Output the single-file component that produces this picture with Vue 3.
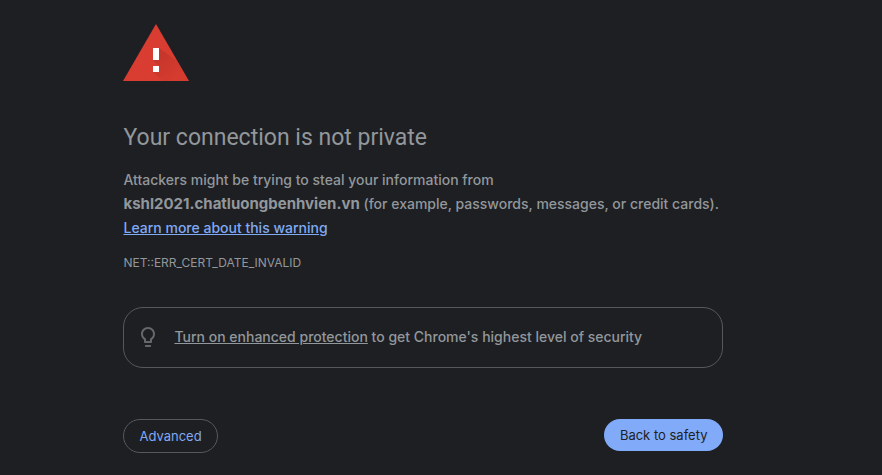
<script setup>
const host = 'kshl2021.chatluongbenhvien.vn'
const errorCode = 'NET::ERR_CERT_DATE_INVALID'
</script>

<template>
  <main class="interstitial">
    <svg class="warning" viewBox="0 0 66 57" role="img" aria-label="Warning">
      <defs>
        <linearGradient id="shade" x1="32" y1="28" x2="54" y2="52" gradientUnits="userSpaceOnUse">
          <stop offset="0" stop-color="#b83227" stop-opacity="0.7" />
          <stop offset="1" stop-color="#b83227" stop-opacity="0.1" />
        </linearGradient>
      </defs>
      <path d="M33 0L66 57H0Z" fill="#d93c30" />
      <path d="M36 24L54 37L65.500 57H40L30 48H36V42L30 36H36Z" fill="url(#shade)" />
      <path d="M30 24h6v12h-6zM30 42h6v6h-6z" fill="#fff" />
    </svg>

    <h1>Your connection is not private</h1>
    <p>
      Attackers might be trying to steal your information from
      <strong>{{ host }}</strong> (for example, passwords, messages, or credit cards).
      <a class="learn" href="#learn">Learn more about this warning</a>
    </p>
    <p class="code">{{ errorCode }}</p>

    <section class="promo">
      <svg class="bulb" viewBox="0 0 24 24" aria-hidden="true">
        <path d="M9 21c0 .55.45 1 1 1h4c.55 0 1-.45 1-1v-1H9v1zm3-19C8.140 2 5 5.140 5 9c0 2.380 1.190 4.470 3 5.740V17c0 .55.45 1 1 1h6c.55 0 1-.45 1-1v-2.260c1.810-1.270 3-3.360 3-5.740 0-3.860-3.140-7-7-7zm2.850 11.100l-.85.6V16h-4v-2.300l-.85-.6C7.800 12.160 7 10.630 7 9c0-2.760 2.240-5 5-5s5 2.240 5 5c0 1.630-.8 3.160-2.150 4.100z" />
      </svg>
      <p><a href="#protection">Turn on enhanced protection</a> to get Chrome's highest level of security</p>
    </section>

    <nav class="actions">
      <button type="button" class="secondary">Advanced</button>
      <button type="button" class="primary">Back to safety</button>
    </nav>
  </main>
</template>

<style>
body {
  background: #1e1f23;
}
</style>

<style scoped>
.interstitial {
  box-sizing: border-box;
  max-width: 600px;
  margin: 0 24px 0 14vw;
  padding: 24px 0 22px;
  color: #92979b;
  font-family: Inter, "Liberation Sans", sans-serif;
  font-size: 14px;
  font-weight: 500;
  line-height: 24px;
}
.warning {
  display: block;
  width: 66px;
  height: 57px;
}
h1 {
  margin: 41px 0 14px;
  font-family: Roboto, "Liberation Sans", sans-serif;
  font-size: 23px;
  font-weight: 400;
  line-height: 32px;
}
p {
  margin: 0;
}
strong {
  display: inline-block;
  font-size: 15px;
  font-weight: 700;
  line-height: 20px;
}
.learn {
  display: table;
  color: #80aaf4;
}
.code {
  margin-top: 11px;
  font-size: 12px;
  font-weight: 400;
}
.promo {
  display: flex;
  align-items: center;
  gap: 14px;
  margin-top: 32px;
  padding: 17px 12px 18px;
  border: 1px solid #55585c;
  border-radius: 20px;
}
.bulb {
  flex: none;
  width: 24px;
  height: 24px;
  fill: #65686b;
}
.promo a {
  color: inherit;
}
.actions {
  display: flex;
  justify-content: space-between;
  align-items: flex-start;
  margin-top: 51px;
}
button {
  padding: 8px 16px;
  border: 0;
  border-radius: 17px;
  font: 400 13px/16px Inter, "Liberation Sans", sans-serif;
  cursor: pointer;
}
.secondary {
  padding: 8px 15px;
  border: 1px solid #55585c;
  background: transparent;
  color: #80aaf4;
}
.primary {
  background: #81abf8;
  color: #202124;
}
</style>
